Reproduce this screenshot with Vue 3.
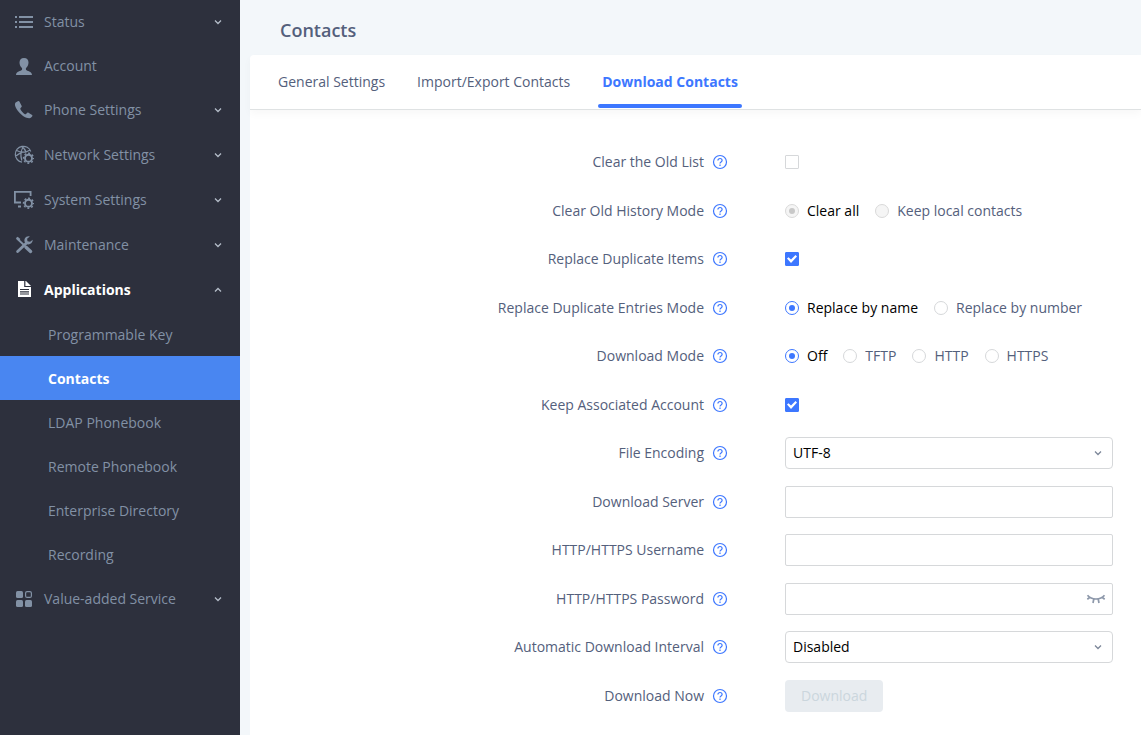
<script setup>
import { ref } from 'vue'

// --- MENU ---
const mainMenu = ref([
  { key: 'status', label: 'Status', children: true },
  { key: 'account', label: 'Account', children: false },
  { key: 'phone', label: 'Phone Settings', children: true }
])

const settingsMenu = ref([
  { key: 'network', label: 'Network Settings', children: true },
  { key: 'system', label: 'System Settings', children: true },
  { key: 'maintenance', label: 'Maintenance', children: true },
  {
    key: 'applications',
    label: 'Applications',
    children: true,
    items: ['Programmable Key', 'Contacts', 'LDAP Phonebook', 'Remote Phonebook', 'Enterprise Directory', 'Recording']
  },
  { key: 'value', label: 'Value-added Service', children: true }
])

const openMenu = ref('applications')
const activePage = ref('Contacts')

const toggleMenu = (item) => {
  openMenu.value = openMenu.value === item.key ? '' : item.key
}

// --- TABS ---
const tabs = ['General Settings', 'Import/Export Contacts', 'Download Contacts']
const activeTab = ref('Download Contacts')

// --- FORM ---
const form = ref({
  clearOldList: false,
  clearHistoryMode: 'Clear all',
  replaceItems: true,
  replaceMode: 'Replace by name',
  downloadMode: 'Off',
  keepAccount: true,
  encoding: 'UTF-8',
  server: '',
  username: '',
  password: '',
  interval: 'Disabled'
})
const showPassword = ref(false)

const fields = [
  { key: 'clearOldList', label: 'Clear the Old List', type: 'checkbox' },
  { key: 'clearHistoryMode', label: 'Clear Old History Mode', type: 'radio', options: ['Clear all', 'Keep local contacts'], disabled: true },
  { key: 'replaceItems', label: 'Replace Duplicate Items', type: 'checkbox' },
  { key: 'replaceMode', label: 'Replace Duplicate Entries Mode', type: 'radio', options: ['Replace by name', 'Replace by number'] },
  { key: 'downloadMode', label: 'Download Mode', type: 'radio', options: ['Off', 'TFTP', 'HTTP', 'HTTPS'] },
  { key: 'keepAccount', label: 'Keep Associated Account', type: 'checkbox' },
  { key: 'encoding', label: 'File Encoding', type: 'select', options: ['UTF-8', 'GBK', 'UTF-16', 'Big5'] },
  { key: 'server', label: 'Download Server', type: 'text' },
  { key: 'username', label: 'HTTP/HTTPS Username', type: 'text' },
  { key: 'password', label: 'HTTP/HTTPS Password', type: 'password' },
  { key: 'interval', label: 'Automatic Download Interval', type: 'select', options: ['Disabled', '2 hours', '4 hours', '6 hours', '12 hours'] },
  { key: 'download', label: 'Download Now', type: 'button' }
]
</script>

<template>
  <div class="layout">
    <nav class="sidebar">
      <ul v-for="(group, g) in [mainMenu, settingsMenu]" :key="g" class="menu" :class="{ 'menu-settings': g === 1 }">
        <li v-for="item in group" :key="item.key">
          <button class="menu-item" :class="{ open: openMenu === item.key }" @click="toggleMenu(item)">
            <svg class="menu-icon" viewBox="0 0 20 20" width="20" height="20" aria-hidden="true">
              <path v-if="item.key === 'status'" fill="currentColor" d="M1 4h2v2H1zM5 4h14v2H5zM1 9h2v2H1zM5 9h14v2H5zM1 14h2v2H1zM5 14h14v2H5z" />
              <path v-if="item.key === 'account'" fill="currentColor" d="M10 2c3 0 4.500 1.900 4.500 4.600 0 2-.9 4-2.200 5.200-.6.6-.5 1.600-.1 2.200.6.900 5.800 1.400 5.800 4.900H2c0-3.500 5.200-4 5.800-4.900.4-.6.5-1.600-.1-2.200C6.400 10.600 5.500 8.600 5.500 6.600 5.500 3.900 7 2 10 2z" />
              <path v-if="item.key === 'phone'" fill="currentColor" d="M3.800 1.200 1.600 2.600C.3 4 1 7.600 4.400 11.600c3.500 4.200 7.800 6.900 11 6.700 1.200-.1 2.400-1.200 3-2.300.2-.4 0-.8-.3-1l-3.600-2.300c-.4-.3-.9-.2-1.200.1l-1.300 1.300c-.3.3-.8.300-1.100.1-1.900-1.300-3.400-3-4.500-5-.2-.4-.1-.8.200-1.100L7.500 7c.3-.3.300-.7.2-1.100L5.400 1.600c-.3-.6-1-.8-1.600-.4z" />
              <path v-if="item.key === 'network'" fill="none" stroke="currentColor" stroke-width="1.200" d="M16.800 6.500A8 8 0 1 0 8 17.200M2.200 5.200c3 1.800 6.300 2.300 9.800 1.800l3.500-1.800M1.200 11.500c2.500-2 4.500-3.400 7-4.100M9.500 1.500C7 5 6.300 10.500 7.800 15.500M7.500 1.500C10 3 11.600 5 12.300 7.500" />
              <path v-if="item.key === 'system'" fill="none" stroke="currentColor" stroke-width="1.800" d="M7 12.500H.9V1.900h15.700v4M4 16.500h3" />
              <g v-if="item.key === 'network' || item.key === 'system'" fill="none" stroke="currentColor">
                <circle cx="14.500" cy="13.200" r="3.500" stroke-width="1.900" />
                <circle cx="14.500" cy="13.200" r="5" stroke-width="1.400" stroke-dasharray="2 1.927" stroke-dashoffset="1" />
              </g>
              <g v-if="item.key === 'maintenance'" fill="none" stroke="currentColor">
                <path stroke-width="1.800" d="M3 3.500 11 11" />
                <path fill="currentColor" stroke="none" d="M1.800 3.200 3.600 1.700 6.400 4 4.800 6z" />
                <path stroke-width="3.400" d="m12 12.200 4.600 4.200" stroke-linecap="round" />
                <path stroke-width="2.800" stroke-linecap="round" d="M3.600 16.600 12.500 8" />
                <path fill="currentColor" stroke="none" d="M15.800 1.400c-4.300-.8-6.300 2.800-4.900 6 1.500 3.200 7.600 2.700 7.900-2.600l-2.700 2-2.600-.6-.4-2.500z" />
              </g>
              <template v-if="item.key === 'applications'">
                <path fill="currentColor" d="M4 1h8l5 5v11H4z" />
                <path fill="none" stroke="#2d303d" stroke-width="1.200" d="M10.800 1v5.500H17M6 9.500h9M6 11.800h9M6 14h9" />
              </template>
              <g v-if="item.key === 'value'" fill="currentColor">
                <rect x="2" y="2" width="7" height="7" rx="1.500" />
                <rect x="2" y="11" width="7" height="7" rx="1.500" />
                <rect x="11" y="11" width="7" height="7" rx="1.500" />
                <rect x="11.600" y="2.600" width="5.800" height="5.800" rx="1.500" fill="none" stroke="currentColor" stroke-width="1.200" />
              </g>
            </svg>
            <span class="menu-label">{{ item.label }}</span>
            <svg v-if="item.children" class="chevron" :class="{ up: openMenu === item.key }" viewBox="0 0 8 8" width="8" height="8" aria-hidden="true">
              <path d="M1 2.500 4 5.500 7 2.500" />
            </svg>
          </button>
          <ul v-if="item.items && openMenu === item.key" class="submenu">
            <li v-for="page in item.items" :key="page">
              <a href="#" :class="{ active: activePage === page }" @click.prevent="activePage = page">{{ page }}</a>
            </li>
          </ul>
        </li>
      </ul>
    </nav>

    <main class="content">
      <h1 class="page-title">Contacts</h1>

      <section class="card">
        <div class="tabs" role="tablist">
          <button
            v-for="tab in tabs"
            :key="tab"
            class="tab"
            role="tab"
            :aria-selected="activeTab === tab"
            :class="{ active: activeTab === tab }"
            @click="activeTab = tab"
          >{{ tab }}</button>
        </div>

        <form class="settings-form" @submit.prevent>
          <div v-for="field in fields" :key="field.key" class="form-row">
            <div class="form-label">
              <span v-if="field.type === 'radio'" :id="field.key + '-label'">{{ field.label }}</span>
              <label v-else :for="field.key">{{ field.label }}</label>
              <svg class="help" viewBox="0 0 16 16" width="16" height="16" aria-hidden="true">
                <circle cx="8" cy="8" r="6.500" />
                <path d="M5.900 6.600c0-1.300.9-2.100 2.100-2.100s2.100.8 2.100 1.900c0 1.500-2.100 1.500-2.100 3.100M8 10.600v1.300" />
              </svg>
            </div>

            <div class="form-control">
              <input v-if="field.type === 'checkbox'" :id="field.key" v-model="form[field.key]" type="checkbox" class="checkbox" />

              <div v-else-if="field.type === 'radio'" class="radio-group" role="radiogroup" :aria-labelledby="field.key + '-label'">
                <label v-for="option in field.options" :key="option" class="radio-label" :class="{ checked: form[field.key] === option }">
                  <input v-model="form[field.key]" type="radio" class="radio" :name="field.key" :value="option" :disabled="field.disabled" />
                  <span>{{ option }}</span>
                </label>
              </div>

              <div v-else-if="field.type === 'select'" class="input-wrap">
                <select :id="field.key" v-model="form[field.key]">
                  <option v-for="option in field.options" :key="option">{{ option }}</option>
                </select>
                <svg class="chevron select-arrow" viewBox="0 0 8 8" width="8" height="8" aria-hidden="true">
                  <path d="M1 2.500 4 5.500 7 2.500" />
                </svg>
              </div>

              <input v-else-if="field.type === 'text'" :id="field.key" v-model="form[field.key]" type="text" class="text-input" />

              <div v-else-if="field.type === 'password'" class="input-wrap">
                <input :id="field.key" v-model="form[field.key]" :type="showPassword ? 'text' : 'password'" class="text-input" />
                <button type="button" class="eye-btn" aria-label="Show password" @click="showPassword = !showPassword">
                  <svg viewBox="0 0 20 12" width="20" height="12" aria-hidden="true">
                    <path d="M1.500 2.300C3.500 4.800 6.300 6 10 6s6.500-1.200 8.500-3.700M4 4.300 1.300 6.300M16 4.300 18.700 6.300M7.800 6 7 10M12.200 6 13 10" />
                  </svg>
                </button>
              </div>

              <button v-else :id="field.key" type="button" class="btn-download" disabled>Download</button>
            </div>
          </div>
        </form>
      </section>
    </main>
  </div>
</template>

<style>
body {
  margin: 0;
  background-color: #f3f7fa;
}
</style>

<style scoped>
/* --- Layout --- */
.layout {
  display: flex;
  min-height: 100vh;
  font-family: "Open Sans", "Noto Sans", sans-serif;
  font-size: 14px;
  line-height: 20px;
  color: #54607c;
}

button,
input,
select {
  font: inherit;
  box-sizing: border-box;
  margin: 0;
}

/* --- Sidebar --- */
.sidebar {
  flex: 0 0 240px;
  background-color: #2d303d;
}

.menu,
.submenu {
  list-style: none;
  margin: 0;
  padding: 0;
}

.menu-item {
  display: flex;
  align-items: center;
  width: 100%;
  height: 44px;
  padding: 0 18px 0 14px;
  border: none;
  background: none;
  color: #8291a5;
  text-align: left;
  cursor: pointer;
}

.menu-settings .menu-item {
  height: 45px;
}

.menu-item.open {
  color: #fff;
  font-weight: 700;
}

.menu-icon {
  margin-right: 10px;
}

.menu-label {
  flex: 1;
}

.chevron {
  fill: none;
  stroke: #b4bcc8;
  stroke-width: 1.3;
}

.chevron.up {
  transform: rotate(180deg);
}

.submenu a {
  display: block;
  padding: 13px 48px 11px;
  color: #8291a5;
  text-decoration: none;
}

.submenu a.active {
  background-color: #4986f1;
  color: #fff;
  font-weight: 700;
}

/* --- Content --- */
.content {
  flex: 1;
  min-width: 0;
  display: flex;
  flex-direction: column;
  padding-left: 10px;
}

.page-title {
  margin: 0;
  padding: 18px 30px 13px;
  font-size: 18px;
  line-height: 24px;
  font-weight: 600;
}

.card {
  flex: 1;
  background-color: #fff;
  border-top-left-radius: 4px;
}

/* --- Tabs --- */
.tabs {
  display: flex;
  gap: 24px;
  height: 54px;
  padding: 0 24px;
  border-bottom: 1px solid #dfe2e3;
  box-shadow: 0 4px 8px rgba(0, 0, 0, 0.03);
}

.tab {
  position: relative;
  padding: 0 4px;
  border: none;
  background: none;
  color: inherit;
  cursor: pointer;
}

.tab.active {
  color: #3d77ff;
  font-weight: 700;
}

.tab.active::after {
  content: "";
  position: absolute;
  left: 0;
  right: 0;
  bottom: 1px;
  height: 4px;
  border-radius: 2px;
  background-color: #3d77ff;
}

/* --- Form --- */
.settings-form {
  display: grid;
  grid-auto-rows: 49px 48px;
  padding-top: 36px;
}

.form-row {
  display: grid;
  grid-template-columns: 1fr 356px;
  align-items: center;
  height: 32px;
}

.form-label {
  display: flex;
  align-items: center;
  justify-content: flex-end;
  gap: 8px;
  padding-right: 57px;
}

.help {
  fill: none;
  stroke: #3d77ff;
  stroke-width: 1.2;
}

.form-control {
  display: flex;
  align-items: center;
  padding-right: 28px;
}

.checkbox,
.radio {
  appearance: none;
  display: grid;
  place-items: center;
  width: 14px;
  height: 14px;
  border: 1px solid #d6d8da;
  border-radius: 1px;
  background-color: #fff;
}

.checkbox:checked {
  border-color: #3d77ff;
  background-color: #3d77ff;
}

.checkbox:checked::after {
  content: "";
  width: 10px;
  height: 8px;
  background-color: #fff;
  clip-path: polygon(0 45%, 15% 28%, 40% 56%, 85% 0, 100% 18%, 40% 100%);
}

.radio {
  border-radius: 50%;
}

.radio:checked {
  border-color: #3d77ff;
}

.radio:checked::after {
  content: "";
  width: 6px;
  height: 6px;
  border-radius: 50%;
  background-color: #3d77ff;
}

.radio:disabled {
  border-color: #d9d9d9;
  background-color: #f5f5f5;
}

.radio:disabled::after {
  background-color: #c8c8c8;
}

.radio-group {
  display: flex;
  gap: 16px;
}

.radio-label {
  display: flex;
  align-items: center;
  gap: 8px;
}

.radio-label.checked {
  color: #000;
}

.input-wrap {
  position: relative;
  width: 100%;
}

select,
.text-input {
  display: block;
  width: 100%;
  height: 32px;
  padding: 0 7px;
  border: 1px solid #d6d8da;
  border-radius: 2px;
  background-color: #fff;
  color: #000;
}

select {
  appearance: none;
  border-radius: 4px;
}

.select-arrow {
  position: absolute;
  right: 11px;
  top: 12px;
  stroke: #7d8799;
  pointer-events: none;
}

.eye-btn {
  position: absolute;
  right: 7px;
  top: 10px;
  display: flex;
  padding: 0;
  border: none;
  background: none;
  cursor: pointer;
}

.eye-btn svg {
  fill: none;
  stroke: #8d98aa;
  stroke-width: 1.7;
}

.btn-download {
  height: 32px;
  padding: 0 16px;
  border: none;
  border-radius: 4px;
  background-color: #e8ecf0;
  color: #cbd6dd;
}
</style>
